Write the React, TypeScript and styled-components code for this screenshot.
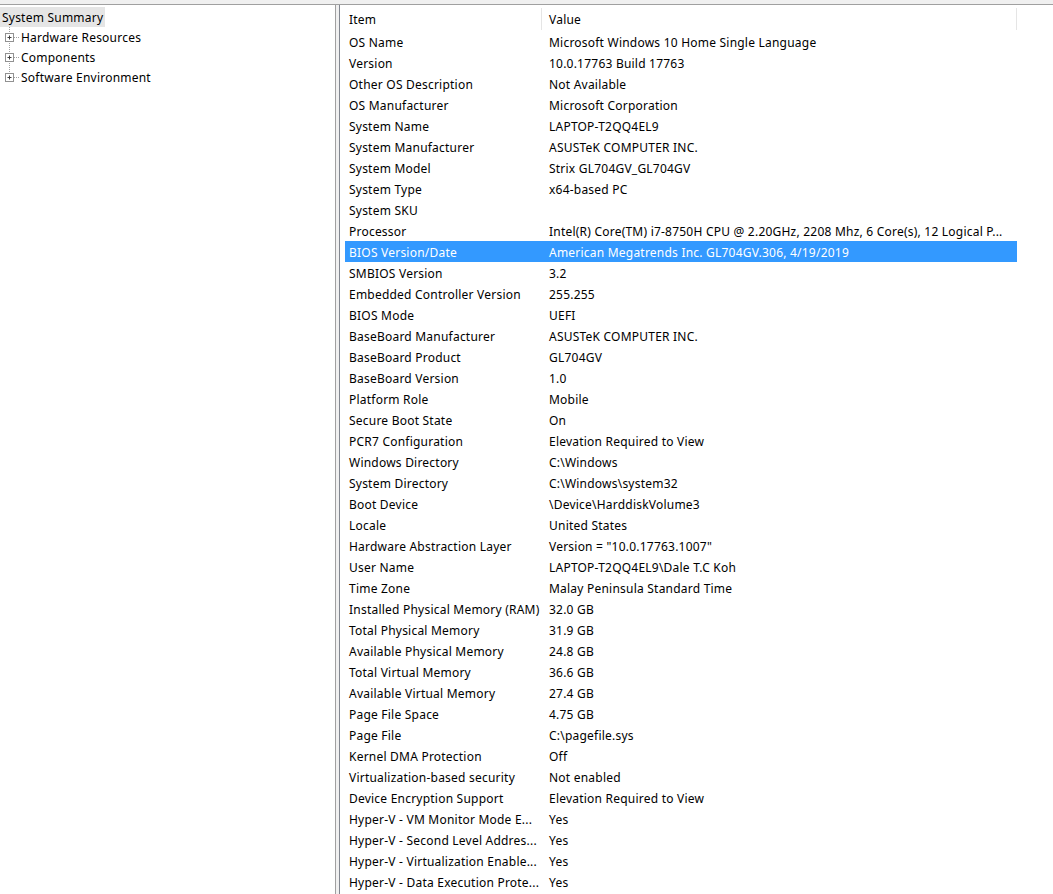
import styled, { createGlobalStyle } from "styled-components";

const GlobalStyle = createGlobalStyle`
	html, body {
		margin: 0;
		padding: 0;
		background: #ffffff;
	}
	body {
		font-family: "Noto Sans", "Open Sans", sans-serif;
		font-size: 12px;
		letter-spacing: 0.22px;
		color: #000000;
	}
`;

type Row = [string, string];

const rows: Row[] = [
	["OS Name", "Microsoft Windows 10 Home Single Language"],
	["Version", "10.0.17763 Build 17763"],
	["Other OS Description", "Not Available"],
	["OS Manufacturer", "Microsoft Corporation"],
	["System Name", "LAPTOP-T2QQ4EL9"],
	["System Manufacturer", "ASUSTeK COMPUTER INC."],
	["System Model", "Strix GL704GV_GL704GV"],
	["System Type", "x64-based PC"],
	["System SKU", ""],
	["Processor", "Intel(R) Core(TM) i7-8750H CPU @ 2.20GHz, 2208 Mhz, 6 Core(s), 12 Logical P..."],
	["BIOS Version/Date", "American Megatrends Inc. GL704GV.306, 4/19/2019"],
	["SMBIOS Version", "3.2"],
	["Embedded Controller Version", "255.255"],
	["BIOS Mode", "UEFI"],
	["BaseBoard Manufacturer", "ASUSTeK COMPUTER INC."],
	["BaseBoard Product", "GL704GV"],
	["BaseBoard Version", "1.0"],
	["Platform Role", "Mobile"],
	["Secure Boot State", "On"],
	["PCR7 Configuration", "Elevation Required to View"],
	["Windows Directory", "C:\\Windows"],
	["System Directory", "C:\\Windows\\system32"],
	["Boot Device", "\\Device\\HarddiskVolume3"],
	["Locale", "United States"],
	["Hardware Abstraction Layer", 'Version = "10.0.17763.1007"'],
	["User Name", "LAPTOP-T2QQ4EL9\\Dale T.C Koh"],
	["Time Zone", "Malay Peninsula Standard Time"],
	["Installed Physical Memory (RAM)", "32.0 GB"],
	["Total Physical Memory", "31.9 GB"],
	["Available Physical Memory", "24.8 GB"],
	["Total Virtual Memory", "36.6 GB"],
	["Available Virtual Memory", "27.4 GB"],
	["Page File Space", "4.75 GB"],
	["Page File", "C:\\pagefile.sys"],
	["Kernel DMA Protection", "Off"],
	["Virtualization-based security", "Not enabled"],
	["Device Encryption Support", "Elevation Required to View"],
	["Hyper-V - VM Monitor Mode E...", "Yes"],
	["Hyper-V - Second Level Addres...", "Yes"],
	["Hyper-V - Virtualization Enable...", "Yes"],
	["Hyper-V - Data Execution Prote...", "Yes"],
];

const treeItems = ["Hardware Resources", "Components", "Software Environment"];

const Window = styled.div`
	width: 1053px;
	height: 894px;
	display: flex;
	flex-direction: column;
	overflow: hidden;
	background: #f0f0f0;
`;

const TopBand = styled.div`
	height: 4px;
	background: #f0f0f0;
	border-bottom: 1px solid #a0a0a0;
	flex-shrink: 0;
`;

const Body = styled.div`
	flex: 1;
	display: flex;
	min-height: 0;
`;

const TreePane = styled.div`
	width: 336px;
	background: #ffffff;
	border-right: 1px solid #a0a0a0;
	padding-top: 2px;
	box-sizing: border-box;
	flex-shrink: 0;
`;

const Splitter = styled.div`
	width: 3px;
	background: #f0f0f0;
	flex-shrink: 0;
`;

const ListPane = styled.div`
	flex: 1;
	background: #ffffff;
	border-left: 1px solid #828790;
	padding-left: 5px;
	overflow: hidden;
`;

const TreeRoot = styled.div<{ $selected?: boolean }>`
	display: inline-flex;
	align-items: center;
	height: 20px;
	padding: 0 2px;
	background: ${(p) => (p.$selected ? "#e5e5e5" : "transparent")};
	white-space: nowrap;
`;

const TreeChildren = styled.div`
	display: flex;
	flex-direction: column;
`;

const TreeItem = styled.div`
	display: flex;
	align-items: center;
	height: 20px;
	white-space: nowrap;
`;

const Connector = styled.span`
	width: 21px;
	height: 20px;
	flex-shrink: 0;
	display: block;
`;

const Header = styled.div`
	display: flex;
	height: 26px;
	padding-top: 2px;
	box-sizing: border-box;
	align-items: center;
`;

const HeaderCell = styled.div<{ $width: number; $pad: number }>`
	width: ${(p) => p.$width}px;
	height: 22px;
	display: flex;
	align-items: center;
	padding-left: ${(p) => p.$pad}px;
	box-sizing: border-box;
	border-right: 1px solid #e5e5e5;
	flex-shrink: 0;
`;

const DataRow = styled.div<{ $selected?: boolean }>`
	display: flex;
	width: 672px;
	height: 21px;
	padding-top: 1px;
	box-sizing: border-box;
	align-items: center;
	background: ${(p) => (p.$selected ? "#3399ff" : "transparent")};
	color: ${(p) => (p.$selected ? "#ffffff" : "#000000")};
`;

const Cell = styled.div<{ $width: number; $pad: number }>`
	width: ${(p) => p.$width}px;
	padding-left: ${(p) => p.$pad}px;
	box-sizing: border-box;
	flex-shrink: 0;
	white-space: nowrap;
	overflow: hidden;
	text-overflow: ellipsis;
`;

const PlusNode = ({ first, last }: { first: boolean; last: boolean }) => (
	<Connector>
		<svg width="21" height="20" viewBox="0 0 21 20">
			<line
				x1="9.5"
				y1={first ? -2 : 0}
				x2="9.5"
				y2={last ? 6 : 20}
				stroke="#a0a0a0"
				strokeDasharray="1 1"
			/>
			<line x1="14" y1="10.5" x2="19" y2="10.5" stroke="#a0a0a0" strokeDasharray="1 1" />
			<rect x="5.5" y="6.5" width="8" height="8" fill="#ffffff" stroke="#919191" />
			<line x1="7.5" y1="10.5" x2="11.5" y2="10.5" stroke="#404040" />
			<line x1="9.5" y1="8.5" x2="9.5" y2="12.5" stroke="#404040" />
		</svg>
	</Connector>
);

const COL1 = 197;
const COL2 = 475;

export default function App() {
	return (
		<>
			<GlobalStyle />
			<Window>
				<TopBand />
				<Body>
					<TreePane>
						<TreeRoot $selected>System Summary</TreeRoot>
						<TreeChildren>
							{treeItems.map((item, i) => (
								<TreeItem key={item}>
									<PlusNode first={i === 0} last={i === treeItems.length - 1} />
									<span>{item}</span>
								</TreeItem>
							))}
						</TreeChildren>
					</TreePane>
					<Splitter />
					<ListPane>
						<Header>
							<HeaderCell $width={COL1} $pad={4}>
								Item
							</HeaderCell>
							<HeaderCell $width={COL2} $pad={7}>
								Value
							</HeaderCell>
						</Header>
						{rows.map(([item, value], i) => (
							<DataRow key={i} $selected={item === "BIOS Version/Date"}>
								<Cell $width={COL1} $pad={4}>
									{item}
								</Cell>
								<Cell $width={COL2} $pad={7}>
									{value}
								</Cell>
							</DataRow>
						))}
					</ListPane>
				</Body>
			</Window>
		</>
	);
}
